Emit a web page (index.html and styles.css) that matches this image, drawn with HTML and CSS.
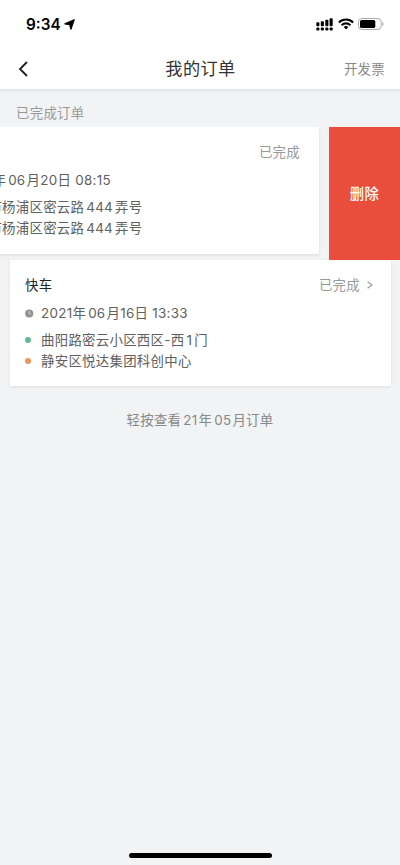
FILE: index.html
```html
<!DOCTYPE html>
<html lang="zh-CN">
<head>
<meta charset="utf-8">
<title>我的订单</title>
<link rel="stylesheet" href="styles.css">
</head>
<body>
<div class="screen">
  <header class="header">
    <div class="status">
      <div class="clock">9:34
        <svg class="locate" width="11" height="11" viewBox="0 0 11 11"><path d="M10.2.7 6.9 10.2 5.7 5.7.9 4.9Z" fill="#000" stroke="#000" stroke-width="1.2" stroke-linejoin="round"/></svg>
      </div>
      <div class="indicators">
        <svg width="17" height="13" viewBox="0 0 17 13"><g><rect x=".3" y="4.2" width="3.1" height="4" rx=".9"/><rect x="4.8" y="3.2" width="3.1" height="5" rx=".9"/><rect x="9.3" y="1.7" width="3.1" height="6.5" rx=".9"/><rect x="13.6" y=".2" width="3.1" height="8" rx=".9"/><rect x=".3" y="9.5" width="3.1" height="3.1" rx="1"/><rect x="4.8" y="9.5" width="3.1" height="3.1" rx="1"/><rect x="9.3" y="9.5" width="3.1" height="3.1" rx="1"/><rect x="13.6" y="9.5" width="3.1" height="3.1" rx="1"/></g></svg>
        <svg class="wifi" width="16" height="12" viewBox="0 0 16 12"><g fill="none" stroke="#000" stroke-width="2.1"><path d="M.9 4.4a10.2 10.2 0 0 1 14.2 0"/><path d="M3.6 7.2a6.3 6.3 0 0 1 8.8 0"/></g><path d="M5.7 9.1a3.4 3.4 0 0 1 4.6 0L8 11.5Z" fill="#000"/></svg>
        <svg class="battery" width="26" height="12" viewBox="0 0 26 12"><rect x=".5" y=".5" width="22.6" height="11" rx="3.2" fill="none" stroke="#aaa"/><rect x="2" y="2" width="15.3" height="8" rx="1.6"/><path d="M24.3 4v4q1.3-.6 1.3-2t-1.3-2" fill="#aaa"/></svg>
      </div>
    </div>
    <nav class="nav">
      <svg class="back" width="10" height="16" viewBox="0 0 10 16"><path d="M9 1 2 8l7 7" fill="none" stroke="#222" stroke-width="1.9"/></svg>
      <h1 class="title">我的订单</h1>
      <span class="invoice">开发票</span>
    </nav>
  </header>
  <main>
    <h2 class="section">已完成订单</h2>
    <div class="swipe">
      <article class="card shifted">
        <div class="top"><span class="name">快车</span><span class="state">已完成</span></div>
        <div class="row date"><i class="mark"></i><span>2021年<b>06</b>月20日 08:15</span></div>
        <div class="row"><i class="mark"><i class="dot green"></i></i><span>上海市杨浦区密云路<b class="wide">444</b>弄号</span></div>
        <div class="row"><i class="mark"><i class="dot orange"></i></i><span>上海市杨浦区密云路<b class="wide">444</b>弄号</span></div>
      </article>
      <button class="delete">删除</button>
    </div>
    <article class="card">
      <div class="top"><span class="name">快车</span><span class="state">已完成<svg class="chevron" width="6" height="8" viewBox="0 0 6 8"><path d="M.6.8 5 4 .6 7.2" fill="none" stroke="#999" stroke-width="1.1"/></svg></span></div>
      <div class="row date"><i class="mark"><svg width="9" height="9" viewBox="0 0 9 9"><circle cx="4.2" cy="4.5" r="4.1" fill="#919191"/><path d="M4.1 2.2v2.6h2" fill="none" stroke="#ddd" stroke-width=".9"/></svg></i><span>2021年<b>06</b>月16日 13:33</span></div>
      <div class="row"><i class="mark"><i class="dot green"></i></i><span>曲阳路密云小区西区-西<b class="wide">1</b>门</span></div>
      <div class="row"><i class="mark"><i class="dot orange"></i></i><span>静安区悦达集团科创中心</span></div>
    </article>
    <p class="more">轻按查看<b>21</b>年<b>05</b>月订单</p>
  </main>
  <div class="home"></div>
</div>
</body>
</html>
```
FILE: styles.css
```css
* { box-sizing: border-box; }
body { margin: 0; font: 13.4px/21px Inter, "Noto Sans CJK SC", sans-serif; letter-spacing: .3px; color: #606060; }
.screen { width: 400px; height: 865px; display: flex; flex-direction: column; overflow: hidden; background: #f2f3f5; }
.header { height: 89px; flex: none; background: #fff; box-shadow: 0 1px 3px rgba(0,0,0,.1); position: relative; }
.status { height: 48px; padding: 0 16px 0 26px; display: flex; justify-content: space-between; align-items: center; }
.clock { font-size: 15.3px; font-weight: 600; letter-spacing: 0; color: #000; display: flex; align-items: center; gap: 3px; }
.indicators { display: flex; align-items: center; }
.wifi { margin-left: 5px; }
.battery { margin-left: 4px; }
.nav { height: 41px; padding: 0 15px 0 18px; display: grid; grid-template-columns: 1fr auto 1fr; align-items: center; }
.title { margin: 0 2px 0 0; font-size: 17.2px; font-weight: 400; letter-spacing: .4px; color: #333; }
.invoice { justify-self: end; padding-top: 2px; color: #888; }
.section { margin: 0; height: 38px; padding: 14px 16px 0; font-size: 13.4px; font-weight: 400; color: #999; }
.swipe { display: flex; height: 132.5px; gap: 10px; overflow: hidden; }
.card { height: 126.5px; margin: 0 9px 0 10px; padding: 15px 18px 0 15px; background: #fff; box-shadow: 0 1px 3px rgba(0,0,0,.09); }
.shifted { width: 389px; flex: none; margin: 0 0 0 -70px; padding: 15px 19px 0 16px; }
.top { display: flex; justify-content: space-between; height: 24px; }
.name { color: #222; }
.state { color: #999; display: flex; align-items: center; height: 21px; }
.chevron { margin-left: 7px; }
.row { display: flex; align-items: center; height: 21.3px; white-space: nowrap; }
.date { height: 29px; margin-bottom: 2px; }
.mark { width: 16px; flex: none; display: flex; align-items: center; }
.shifted .mark { width: 15px; }
.dot { width: 6px; height: 6px; border-radius: 50%; }
.green { background: #5eb99b; }
.orange { background: #ee9255; }
b { font-weight: 400; margin: 0 1px 0 2px; }
.wide { margin: 0 2px; }
.delete { flex: 1; border: 0; padding: 2px 0 0; background: #e94e3d; color: #fff; font: 500 14.4px/20px Inter, "Noto Sans CJK SC", sans-serif; letter-spacing: .3px; }
.more { margin: 24px 0 0; text-align: center; color: #888; }
.home { width: 143px; height: 5px; border-radius: 3px; background: #000; margin: auto auto 7px; }
```
